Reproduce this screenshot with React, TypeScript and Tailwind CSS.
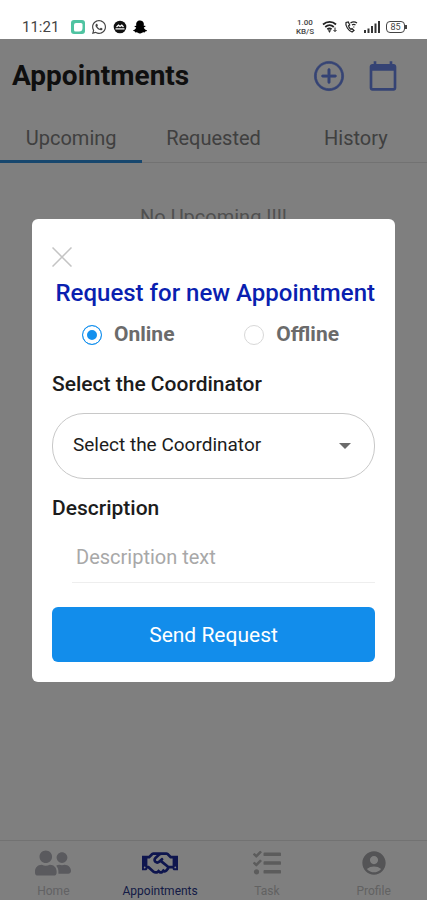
import React, { useState } from "react";
import { FaRegHandshake, FaSnapchatGhost, FaTasks, FaUserFriends, FaWhatsapp } from "react-icons/fa";
import { MdAccountCircle, MdCalendarToday } from "react-icons/md";
import { IoIosAddCircleOutline } from "react-icons/io";

const tabs = ["Upcoming", "Requested", "History"];

const navItems = [
    { label: "Home", icon: <FaUserFriends className="size-9" />, color: "text-[#b4b4bc]", text: "text-[#c4c4c8]" },
    { label: "Appointments", icon: <FaRegHandshake className="size-9" />, color: "text-[#1c2a9c]", text: "text-[#2a388c]" },
    { label: "Task", icon: <FaTasks className="size-7" />, color: "text-[#b8b8b8]", text: "text-[#c4c4c4]" },
    { label: "Profile", icon: <MdAccountCircle className="size-7" />, color: "text-[#a8a8ac]", text: "text-[#c4c4c4]" },
];

function StatusBar() {
    return (
        <div className="relative z-20 flex h-[39px] items-end justify-between bg-white pr-5 pb-1 pl-[22px] text-[#444]">
            <div className="flex h-4 items-center gap-1.5">
                <span className="mr-1.5 text-[15px] leading-4">11:21</span>
                <svg viewBox="0 0 14 14" className="size-3.5">
                    <rect width="14" height="14" rx="3" fill="#4fc3a1" />
                    <path d="M5 3h5a1.500 1.500 0 0 1 1.500 1.500V8a3.500 3.500 0 0 1-3.500 3.500H4.500A1.500 1.500 0 0 1 3 10V5a2 2 0 0 1 2-2z" fill="#fff" />
                </svg>
                <FaWhatsapp className="size-4" />
                <svg viewBox="0 0 14 14" className="size-3.5">
                    <circle cx="7" cy="7" r="6.300" fill="#111" />
                    <path d="M2.500 8.800h9M3.500 7l2-1.800 1.500 1.300 1.800-1.300L10.500 7" stroke="#fff" strokeWidth="1.300" fill="none" />
                </svg>
                <FaSnapchatGhost className="size-3.5 text-black" />
            </div>
            <div className="flex h-4 items-center gap-1.5">
                <div className="mr-0.5 flex flex-col items-center text-[8px] leading-[9px] font-medium">
                    <span>1.00</span>
                    <span>KB/S</span>
                </div>
                <svg viewBox="0 0 16 14" className="h-3.5 w-4" fill="none" stroke="#222" strokeWidth="1.800">
                    <path d="M1 4.500c4-3.500 9.500-3.500 13 0M3.200 7c2.800-2.300 6-2.300 8.600 0M5.300 9.300c1.400-1 3-1 4.300 0" />
                    <path d="M6.300 10.500h2.400L7.500 12.500z" fill="#222" strokeWidth="0.500" />
                    <path d="M13 7.500v4M11.500 10l1.500 1.500 1.500-1.500" strokeWidth="1" />
                </svg>
                <svg viewBox="0 0 14 14" className="size-3.5" fill="none" stroke="#222">
                    <path d="M2 2.500c-1 3 2.500 8.500 6 9.500l2-1.500-2-2-1.200.8C5.500 8.500 4.700 7 4.500 5.700L5.700 5 4.300 2z" strokeWidth="1.200" />
                    <path d="M6.500 3c2-1.500 4.500-1.500 6.500 0M8 5c1.200-.8 2.500-.8 3.500 0" strokeWidth="1.200" />
                    <path d="M9.800 6.500v1" strokeWidth="1.200" />
                </svg>
                <svg viewBox="0 0 16 12" className="h-3 w-4" fill="#333">
                    <rect x="0" y="9" width="2" height="3" />
                    <rect x="3.500" y="7.500" width="2" height="4.500" />
                    <rect x="7" y="5" width="2" height="7" />
                    <rect x="10.500" y="2.500" width="2" height="9.500" />
                    <rect x="14" y="0" width="2" height="12" />
                </svg>
                <div className="flex items-center">
                    <span className="flex h-3 w-[19px] items-center justify-center rounded border border-[#444] text-[9px] leading-none">85</span>
                    <span className="h-1 w-0.5 bg-[#444]" />
                </div>
            </div>
        </div>
    );
}

function RequestDialog() {
    const [mode, setMode] = useState("Online");

    return (
        <div className="fixed inset-0 z-10 flex items-center justify-center bg-black/50 px-8">
            <form
                role="dialog"
                aria-labelledby="dialog-title"
                onSubmit={(e) => e.preventDefault()}
                className="flex w-full max-w-md flex-col rounded-md bg-white px-5 pt-7 pb-5 text-[#1c1c1c]"
            >
                <button type="button" aria-label="Close" className="size-5 text-[#c4c4c4]">
                    <svg viewBox="0 0 20 20" className="size-5" stroke="currentColor" strokeWidth="1.500">
                        <path d="M0.500 0.500l19 19M19.500 0.500l-19 19" />
                    </svg>
                </button>
                <h2 id="dialog-title" className="mt-3 text-right text-2xl leading-7 font-medium whitespace-nowrap text-[#0a1fb0]">
                    Request for new Appointment
                </h2>
                <div className="mt-4 flex justify-between pr-9 pl-[30px]">
                    {["Online", "Offline"].map((item) => (
                        <label key={item} className="flex h-6 items-center gap-3 text-[21px] font-bold text-[#6b6b6b]">
                            <input
                                type="radio"
                                name="mode"
                                value={item}
                                checked={mode === item}
                                onChange={() => setMode(item)}
                                className="size-5 appearance-none rounded-full border border-[#d8d8d8] bg-white checked:border-[#1490ee] checked:bg-[#1490ee] checked:shadow-[inset_0_0_0_4px_white]"
                            />
                            {item}
                        </label>
                    ))}
                </div>
                <label htmlFor="coordinator" className="mt-6 text-[21px] leading-[26px] font-medium">
                    Select the Coordinator
                </label>
                <div className="relative mt-4">
                    <select id="coordinator" className="h-[66px] w-full appearance-none rounded-[32px] border border-[#c8c8c8] bg-white px-5 text-[19px]">
                        <option>Select the Coordinator</option>
                    </select>
                    <svg viewBox="0 0 12 6" className="pointer-events-none absolute top-[30px] right-6 h-1.5 w-3" fill="#6b6b6b">
                        <path d="M0 0h12L6 6z" />
                    </svg>
                </div>
                <label htmlFor="description" className="mt-4 text-[21px] leading-[26px] font-medium">
                    Description
                </label>
                <input
                    id="description"
                    type="text"
                    placeholder="Description text"
                    className="mt-3 ml-5 h-[50px] border-b border-[#eeeeee] px-1 text-xl placeholder:text-[#a8a8a8]"
                />
                <button type="submit" className="mt-6 h-[55px] rounded-md bg-[#128deb] pt-1 text-[21px] text-white">
                    Send Request
                </button>
            </form>
        </div>
    );
}

export default function App() {
    return (
        <div className="flex min-h-screen flex-col bg-white font-[Roboto,sans-serif]">
            <StatusBar />
            <header className="flex h-[74px] items-center justify-between pr-7 pl-3">
                <h1 className="text-[28px] font-bold text-[#1e1e1e]">Appointments</h1>
                <div className="flex items-center gap-5 text-[#6a86e8]">
                    <button aria-label="New appointment">
                        <IoIosAddCircleOutline className="size-9" strokeWidth="10" stroke="currentColor" />
                    </button>
                    <button aria-label="Calendar">
                        <MdCalendarToday className="size-8" />
                    </button>
                </div>
            </header>
            <div className="grid h-[50px] grid-cols-3 border-b border-[#e4e4e4]">
                {tabs.map((tab) => (
                    <button
                        key={tab}
                        className={`-mb-px border-b-[3px] pt-0.5 text-xl text-[#808080] ${tab === "Upcoming" ? "border-[#2f8fdc]" : "border-transparent"}`}
                    >
                        {tab}
                    </button>
                ))}
            </div>
            <main className="flex-1 pt-10">
                <p className="text-center text-xl text-[#a0a0a0]">No Upcoming !!!!</p>
            </main>
            <nav className="grid h-[60px] grid-cols-4 border-t border-[#e4e4e4]">
                {navItems.map((item) => (
                    <a key={item.label} href="#" className={`flex flex-col items-center pt-1 text-xs ${item.color}`}>
                        <span className="flex h-9 items-center">{item.icon}</span>
                        <span className={`mt-0.5 ${item.text}`}>{item.label}</span>
                    </a>
                ))}
            </nav>
            <RequestDialog />
        </div>
    );
}
